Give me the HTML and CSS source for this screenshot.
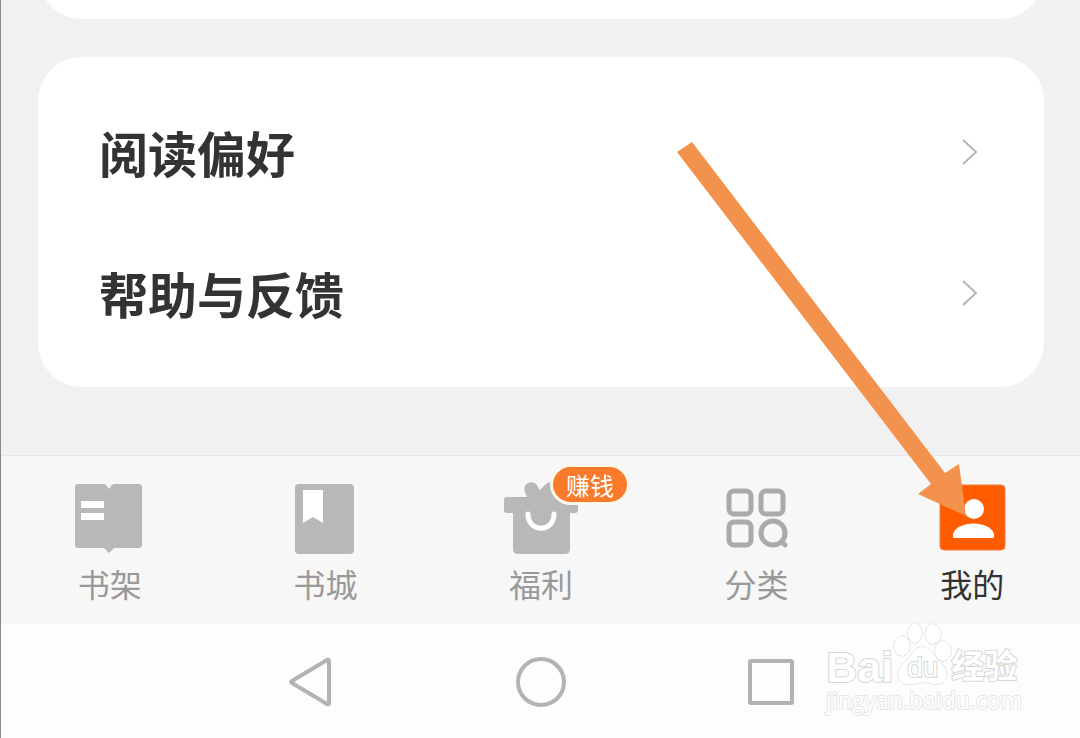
FILE: index.html
```html
<!DOCTYPE html>
<html lang="zh-CN">
<head>
	<meta charset="utf-8"/>
	<title>我的</title>
	<meta name="viewport" content="width=device-width,initial-scale=1">
	<link rel="stylesheet" href="styles.css">
</head>
<body>
	<main class="content">
		<div class="card card-prev"></div>
		<div class="card">
			<a class="row" href="#">
				<span>阅读偏好</span>
				<svg class="chevron" viewBox="0 0 18 30"><path d="M2 3L15 15L2 27"/></svg>
			</a>
			<a class="row" href="#">
				<span>帮助与反馈</span>
				<svg class="chevron" viewBox="0 0 18 30"><path d="M2 3L15 15L2 27"/></svg>
			</a>
		</div>
	</main>

	<nav class="tabs">
		<a class="tab" href="#">
			<svg class="icon" viewBox="0 0 80 80">
				<path fill="#b8b8b8" d="M9 4H33Q35 4 36 5L39 9L42 5Q43 4 45 4H69Q72 4 72 7V65Q72 68 69 68H44L39 73L34 68H8Q5 68 5 65V7Q5 4 8 4Z"/>
				<path fill="#fff" d="M11 21H34V28H11ZM11 33H34V40H11Z"/>
			</svg>
			<span>书架</span>
		</a>
		<a class="tab" href="#">
			<svg class="icon" viewBox="0 0 80 80">
				<rect fill="#b8b8b8" x="10" y="4" width="59" height="70" rx="4"/>
				<path fill="#fff" d="M18 10H38V43L28 37L18 43Z"/>
			</svg>
			<span>书城</span>
		</a>
		<a class="tab" href="#">
			<svg class="icon" viewBox="0 0 80 80">
				<path fill="#b8b8b8" d="M6 17H26L24 12C21 5 29 -1 35 4L39 10L45 4C51 -1 59 5 56 12L54 17H74Q77 17 77 20V30Q77 33 74 33H69V69Q69 74 64 74H17Q12 74 12 69V33H6Q3 33 3 30V20Q3 17 6 17Z"/>
				<path fill="none" stroke="#fff" stroke-width="5" stroke-linecap="round" d="M27 34C27 53 53 53 53 34"/>
			</svg>
			<span>福利</span>
			<b class="badge">赚钱</b>
		</a>
		<a class="tab" href="#">
			<svg class="icon" viewBox="0 0 80 80">
				<g fill="none" stroke="#aaa" stroke-width="5">
					<rect x="12" y="11" width="22" height="23" rx="5"/>
					<rect x="44" y="11" width="22" height="23" rx="5"/>
					<rect x="12" y="42" width="22" height="23" rx="5"/>
					<circle cx="56" cy="53" r="12"/>
					<path stroke-linecap="round" d="M65 62L68 65"/>
				</g>
			</svg>
			<span>分类</span>
		</a>
		<a class="tab active" href="#">
			<svg class="icon" viewBox="0 0 80 80">
				<rect fill="#ff5c00" stroke="#ee7c40" x="8" y="5" width="65" height="65" rx="4"/>
				<circle fill="#fff" cx="42" cy="29" r="10"/>
				<path fill="#fff" d="M21 57V54C25 40 58 40 62 54V57Q62 58 61 58H22Q21 58 21 57Z"/>
			</svg>
			<span>我的</span>
		</a>
		<svg class="arrow" viewBox="0 0 290 376"><path d="M1 12L16 2L269 333L283 324L290 376L242 354L255 344Z"/></svg>
	</nav>

	<div class="sysbar">
		<button class="key" aria-label="返回"><svg viewBox="0 0 50 50"><path d="M43 4V46Q43 48 41 47L6 26Q4 25 6 24L41 3Q43 2 43 4Z"/></svg></button>
		<button class="key" aria-label="主页"><svg viewBox="0 0 50 50"><circle cx="25" cy="25" r="23"/></svg></button>
		<button class="key" aria-label="最近任务"><svg viewBox="0 0 50 50"><rect x="4" y="4" width="42" height="42" rx="1"/></svg></button>
		<div class="mark">
			<div class="brand">
				<span class="bai">Bai</span>
				<span class="paw">
					<svg viewBox="0 0 58 64">
						<ellipse cx="9" cy="24" rx="8" ry="10"/>
						<ellipse cx="22" cy="11" rx="7" ry="10"/>
						<ellipse cx="40" cy="12" rx="8" ry="10"/>
						<ellipse cx="50" cy="29" rx="8" ry="10"/>
						<path d="M29 25C36 25 39 31 44 37C49 42 54 46 54 53C53 62 44 63 39 62C33 60 26 60 21 62C14 64 5 61 5 52C5 46 10 42 15 37C20 31 22 25 29 25Z"/>
					</svg>
					<span class="du">du</span>
				</span>
				<span class="jy">经验</span>
			</div>
			<div class="site">jingyan.baidu.com</div>
		</div>
	</div>
</body>
</html>
```

FILE: styles.css
```css
*{box-sizing: border-box;}
html, body{height: 100%;}
body{
	margin: 0;
	display: flex;
	flex-direction: column;
	border-left: 1px solid #8a8a8a;
	background-color: #f1f1f1;
	font-family: "Noto Sans CJK SC", sans-serif;
	overflow: hidden;
}
a{color: inherit;text-decoration: none;}
svg{display: block;}

.content{flex: 1;padding: 0 36px 0 37px;}
.card{padding: 24px 65px 24px 61px;border-radius: 44px;background-color: #fff;}
/* tail of the card that is scrolled off the top */
.card-prev{height: 100px;margin-top: -81px;margin-bottom: 38px;}
.row{
	display: flex;
	align-items: center;
	justify-content: space-between;
	height: 141px;
	font-size: 49px;
	font-weight: bold;
	color: #333;
}
.chevron{width: 18px;height: 30px;fill: none;stroke: #b5b5b5;stroke-width: 2;}

.tabs{
	position: relative;
	display: flex;
	height: 169px;
	padding: 24px 0 0 1px;
	border-top: 1px solid #e6e6e6;
	background-color: #f7f7f7;
}
.tab{
	position: relative;
	flex: 1;
	display: flex;
	flex-direction: column;
	align-items: center;
	gap: 1px;
	font-size: 32px;
	line-height: 44px;
	color: #999;
}
.active{color: #333;}
.icon{width: 80px;height: 80px;overflow: visible;}
.badge{
	position: absolute;
	top: -16px;
	left: 50%;
	margin-left: 9px;
	padding: 0 13px;
	border: 3px solid #fff6ec;
	border-radius: 21px;
	background-color: #fa7a2c;
	color: #fff;
	font-size: 24px;
	font-weight: normal;
	line-height: 35px;
}
.arrow{position: absolute;right: 114px;bottom: 108px;width: 290px;height: 376px;fill: #f3924c;}

.sysbar{
	position: relative;
	display: flex;
	align-items: center;
	justify-content: center;
	gap: 180px;
	height: 114px;
	padding-top: 2px;
	background-color: #fdfdfd;
}
.key{width: 50px;height: 50px;padding: 0;border: none;background: none;}
.key svg{width: 50px;height: 50px;fill: none;stroke: #b3b3b3;stroke-width: 4;}

.mark{
	position: absolute;
	right: 58px;
	top: 0;
	color: #fff;
	paint-order: stroke fill;
	-webkit-text-stroke: 2px #d6d6d6;
}
.brand{display: flex;align-items: flex-end;height: 62px;}
.bai{font: bold 43px/38px "Liberation Sans", sans-serif;}
.paw{position: relative;}
.paw svg{width: 58px;height: 64px;overflow: visible;fill: #fff;stroke: #cfcfcf;}
.du{position: absolute;left: 14px;bottom: 2px;font: 28px/32px "Liberation Sans", sans-serif;}
.jy{font-size: 33px;font-weight: bold;line-height: 44px;}
.site{font: 23px/28px "Open Sans", sans-serif;-webkit-text-stroke: 2px #e6e6e6;}
```
